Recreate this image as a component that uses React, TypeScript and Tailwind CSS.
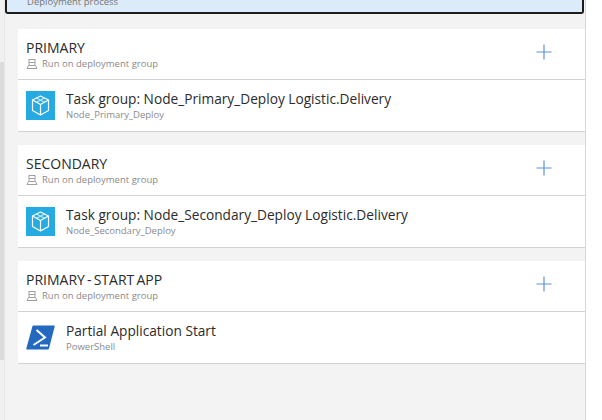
function Cube() {
  return (
    <div className="w-[29px] h-[29px] bg-[#25aae1] flex items-center justify-center shrink-0">
      <svg width="19" height="21" viewBox="0 0 19 21" fill="none" stroke="#ffffff" strokeWidth="1.2" strokeLinejoin="round">
        <path d="M9.5 1 L17.5 5 V15.5 L9.5 20 L1.5 15.5 V5 Z" />
        <path d="M1.5 5 L9.5 9.5 L17.5 5 M9.5 9.5 V20" />
        <path d="M5.5 3 L13.5 7.2 M13.5 3 L5.5 7.2" opacity="0.7" />
      </svg>
    </div>
  );
}
function Shell() {
  return (
    <div className="w-[29px] h-[25px] shrink-0">
      <svg width="29" height="25" viewBox="0 0 29 25">
        <path d="M6.5 1 Q6.8 0.5 7.5 0.5 H28 Q29 0.5 28.7 1.5 L23 23.5 Q22.7 24.5 21.8 24.5 H1 Q0 24.5 0.3 23.5 Z" fill="#2369c0" />
        <path d="M10.5 5 L19 12.5 L7.5 20" fill="none" stroke="#ffffff" strokeWidth="2" />
        <path d="M14 20.5 H22" fill="none" stroke="#ffffff" strokeWidth="2" />
      </svg>
    </div>
  );
}
function Agent() {
  return (
    <svg width="12" height="12" viewBox="0 0 12 12" fill="none" stroke="#a0a0a0" strokeWidth="1" className="shrink-0">
      <rect x="3" y="1.5" width="6" height="6" />
      <path d="M3 4.5 H9" />
      <path d="M2.5 7.5 L1 10.5 H11 L9.5 7.5" />
    </svg>
  );
}
function Phase({ title, task, sub, icon }: { title: string; task: string; sub: string; icon: React.ReactNode }) {
  return (
    <section className="bg-white border-b border-[#d2d2d2]">
      <div className="h-[51px] border-b border-[#d2d2d2] pl-[8px] pr-[33px] pt-[10px] flex justify-between">
        <div>
          <div className="text-[14px] leading-[17px] text-[#2b2b2b] [word-spacing:-1.5px]">{title}</div>
          <div className="flex items-center gap-[4px] text-[9.5px] leading-[14px] text-[#8a8a8a] mt-[1px]">
            <Agent />
            <span>Run on deployment group</span>
          </div>
        </div>
        <svg width="16" height="16" viewBox="0 0 16 16" className="mt-[5px]" stroke="#5f93d8" strokeWidth="1.2">
          <path d="M0.5 8 H15.5 M8 0.5 V15.5" />
        </svg>
      </div>
      <div className="h-[51px] pl-[8px] flex items-center gap-[11px]">
        {icon}
        <div>
          <div className="text-[13.7px] leading-[17px] text-[#2b2b2b]">{task}</div>
          <div className="text-[9.5px] leading-[14px] text-[#8a8a8a] mt-[1px]">{sub}</div>
        </div>
      </div>
    </section>
  );
}
export default function App() {
  return (
    <div className="w-[602px] h-[420px] overflow-hidden bg-white flex font-['Open_Sans','Noto_Sans',sans-serif]">
      <div className="w-[5px] flex flex-col bg-[#f0f0f0] border-r border-[#e6e6e6] shrink-0">
        <div className="h-[62px]" />
        <div className="h-[298px] bg-[#dcdcdc]" />
      </div>
      <main className="w-[581px] bg-[#f3f3f3] border-r border-[#d6d6d6] flex flex-col shrink-0">
        <div className="h-[14px] mr-[1px] bg-[#dcebf9] border-2 border-t-0 border-[#1c1c1c] rounded-b-[3px] shrink-0 pl-[20px] overflow-hidden">
          <div className="text-[9.5px] leading-[14px] -mt-[5px] text-[#777777]">Deployment process</div>
        </div>
        <div className="flex flex-col gap-[13px] pt-[15px] pl-[13px] pr-0">
          <Phase title="PRIMARY" task="Task group: Node_Primary_Deploy Logistic.Delivery" sub="Node_Primary_Deploy" icon={<Cube />} />
          <Phase title="SECONDARY" task="Task group: Node_Secondary_Deploy Logistic.Delivery" sub="Node_Secondary_Deploy" icon={<Cube />} />
          <Phase title="PRIMARY - START APP" task="Partial Application Start" sub="PowerShell" icon={<Shell />} />
        </div>
      </main>
    </div>
  );
}
